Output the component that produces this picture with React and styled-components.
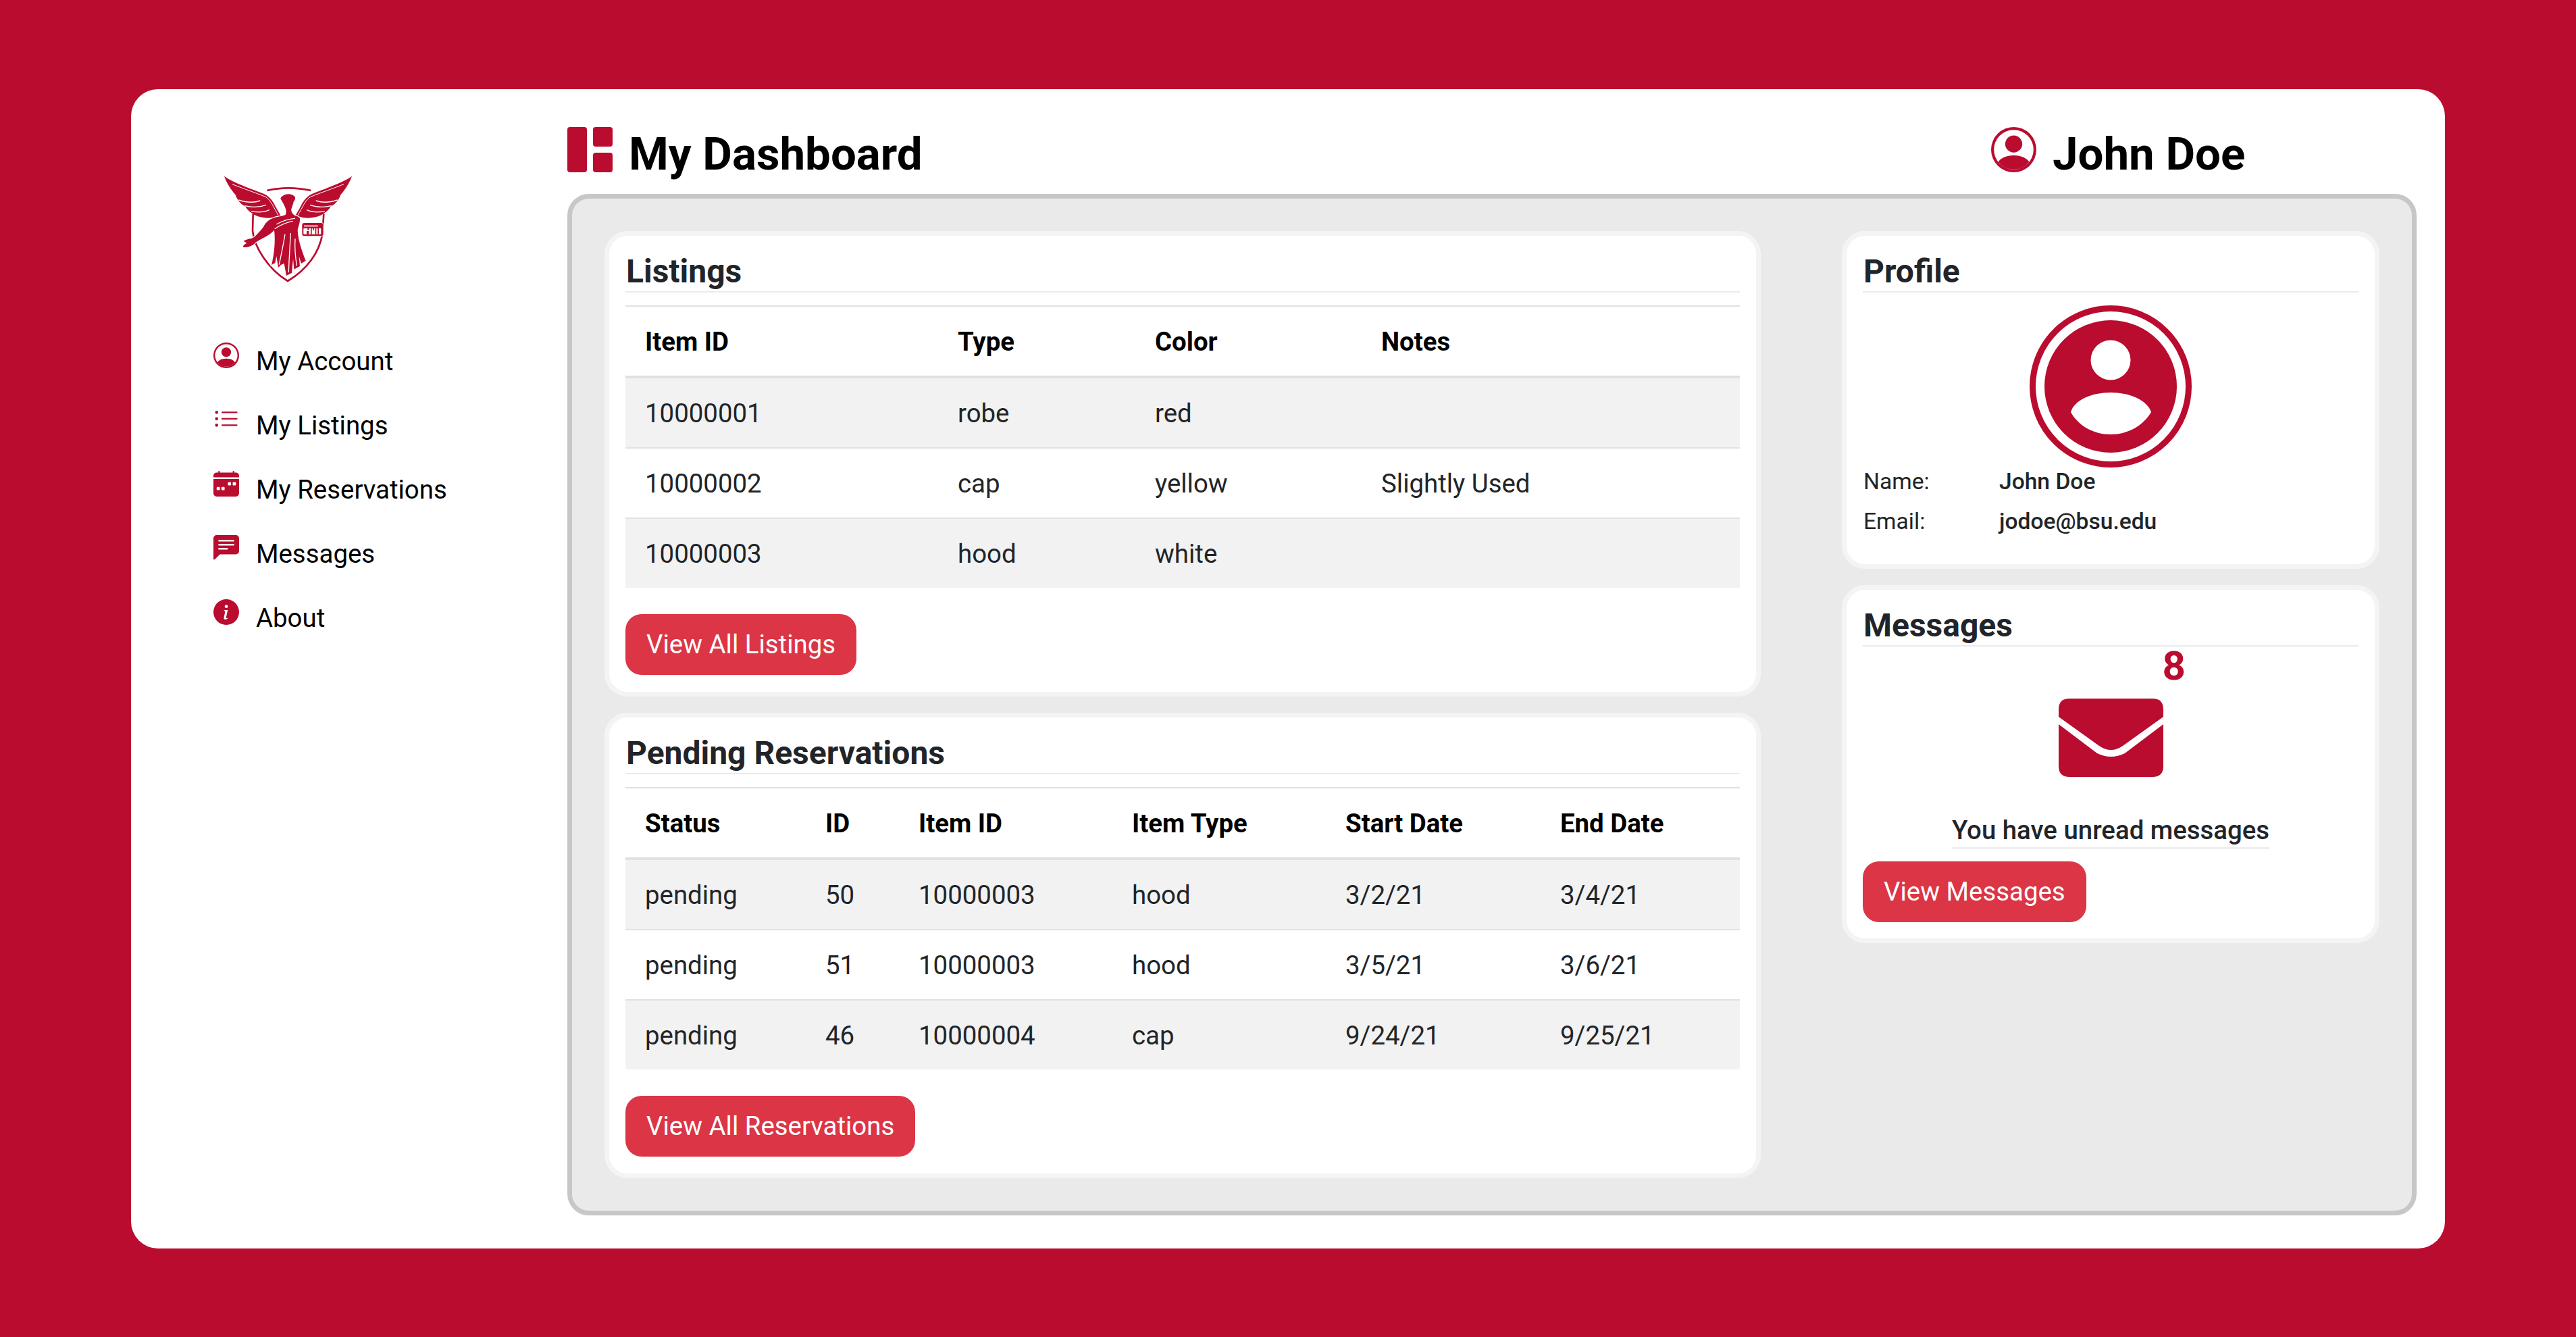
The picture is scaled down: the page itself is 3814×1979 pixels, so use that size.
import React from "react";
import styled, { createGlobalStyle } from "styled-components";

const RED = "#BA0C2F";

const Global = createGlobalStyle`
  html, body { margin: 0; padding: 0; background: ${RED}; }
  * { box-sizing: border-box; }
  body { font-family: Roboto, "Liberation Sans", sans-serif; }
`;

const Page = styled.div`
  width: 3814px;
  height: 1979px;
  padding: 132px 194px 131px 194px;
  background: ${RED};
`;
const Shell = styled.div`
  height: 1716px;
  background: #fff;
  border-radius: 40px;
  display: flex;
  padding: 0 42px 50px 0;
`;
const Sidebar = styled.aside`
  width: 646px;
  flex: none;
  padding: 118px 0 0 122px;
`;
const Logo = styled.svg`
  display: block;
  width: 210px;
  height: 176px;
  margin-left: 6px;
  margin-bottom: 81px;
`;
const Nav = styled.nav`
  display: flex;
  flex-direction: column;
`;
const NavItem = styled.a`
  display: flex;
  align-items: flex-start;
  height: 95px;
  gap: 25px;
  color: #000;
  font-size: 38.4px;
  line-height: 46px;
  svg { width: 38px; height: 38px; flex: none; }
  span { margin-top: 5px; }
`;
const Main = styled.main`
  flex: 1;
  display: flex;
  flex-direction: column;
  min-width: 0;
`;
const Header = styled.header`
  height: 155px;
  flex: none;
  padding-top: 56px;
  display: flex;
`;
const HeadGroup = styled.div`
  display: flex;
  align-items: flex-start;
  gap: 24px;
  width: ${(p) => p.$w || "auto"};
  svg { width: 67px; height: 67px; flex: none; }
`;
const HeadTitle = styled.h1`
  margin: 0;
  font-size: 67.2px;
  line-height: 80px;
  font-weight: 700;
  color: #000;
`;
const Panel = styled.div`
  flex: 1;
  background: #eaeaea;
  border: 7px solid #c8c7c8;
  border-radius: 32px;
  padding: 48px;
  display: flex;
  justify-content: space-between;
  align-items: flex-start;
`;
const Column = styled.div`
  width: ${(p) => p.$w}px;
  display: flex;
  flex-direction: column;
  gap: 24px;
`;
const Card = styled.section`
  background: #fff;
  border: 7px solid #f4f4f4;
  border-radius: 34px;
  padding: 25px 24px;
  height: ${(p) => (p.$h ? `${p.$h}px` : "auto")};
  display: flex;
  flex-direction: column;
`;
const CardTitle = styled.h2`
  margin: 0;
  flex: none;
  font-size: 48px;
  line-height: 56px;
  font-weight: 700;
  color: #212529;
  border-bottom: 2px solid #e9ebed;
  height: 59px;
  padding-left: 1px;
`;
const Table = styled.table`
  border-collapse: separate;
  border-spacing: 0;
  table-layout: fixed;
  width: 100%;
  margin-top: 19px;
  font-size: 38.4px;
  color: #212529;
  th {
    text-align: left;
    font-weight: 700;
    color: #000;
    padding: 0 28px 0 29px;
    height: 108px;
    border-top: 2px solid #dee2e6;
    border-bottom: 4px solid #dee2e6;
  }
  td {
    padding: 0 28px 0 29px;
    height: 104px;
    border-bottom: 2px solid #dee2e6;
  }
  tbody tr:last-child td { border-bottom: 0; height: 102px; }
  tbody tr:nth-child(odd) { background: #f2f2f2; }
`;
const Button = styled.a`
  flex: none;
  align-self: flex-start;
  margin-top: ${(p) => p.$top}px;
  height: 90px;
  display: flex;
  align-items: center;
  padding: 0 31px 2px;
  background: #dc3545;
  border-radius: 24px;
  color: #fff;
  font-size: 38.4px;
`;
const Avatar = styled.svg`
  display: block;
  flex: none;
  width: 240px;
  height: 240px;
  margin: 19px auto 0;
`;
const InfoRow = styled.div`
  display: grid;
  grid-template-columns: 201px 1fr;
  padding-left: 1px;
  font-size: 33.6px;
  line-height: 59px;
  color: #212529;
  b { font-weight: 500; }
`;
const Info = styled.div`
  margin-top: -9px;
`;
const Badge = styled.div`
  flex: none;
  align-self: flex-end;
  margin-right: 256px;
  height: 66px;
  font-size: 60px;
  line-height: 58px;
  font-weight: 700;
  color: ${RED};
`;
const Envelope = styled.svg`
  display: block;
  flex: none;
  width: 155px;
  height: 116px;
  margin: 11px auto 0;
`;
const Unread = styled.div`
  flex: none;
  align-self: center;
  margin-top: 56px;
  font-size: 38.4px;
  line-height: 46px;
  font-weight: 500;
  color: #212529;
  border-bottom: 3px solid #eeeeee;
  padding-bottom: 2px;
`;
const Col = styled.col`
  width: ${(p) => p.$w}px;
`;

const PersonCircle = () => (
  <svg viewBox="0 0 16 16" fill={RED}>
    <path d="M13.468 12.37C12.758 11.226 11.195 10 8 10s-4.757 1.225-5.468 2.37A6.987 6.987 0 0 0 8 15a6.987 6.987 0 0 0 5.468-2.63z" />
    <path fillRule="evenodd" d="M8 9a3 3 0 1 0 0-6 3 3 0 0 0 0 6z" />
    <path fillRule="evenodd" d="M8 1a7 7 0 1 0 0 14A7 7 0 0 0 8 1zM0 8a8 8 0 1 1 16 0A8 8 0 0 1 0 8z" />
  </svg>
);

const Wing = () => (
  <g>
    <path
      fill={RED}
      d="M30 32 C70 62 150 88 205 110 C235 122 250 150 262 175 L287 218 L262 212 C240 220 200 222 165 205 C150 195 132 184 125 168 C105 158 88 140 80 115 C60 92 40 62 30 32Z"
    />
    <path d="M66 68 C110 86 170 106 213 124 C236 136 250 172 270 206" fill="none" stroke="#fff" strokeWidth="3" />
    <path d="M94 138 C130 150 165 150 190 141" fill="none" stroke="#fff" strokeWidth="4" />
    <path d="M120 164 C155 172 190 170 216 160" fill="none" stroke="#fff" strokeWidth="4" />
    <path d="M150 188 C180 194 210 192 230 182" fill="none" stroke="#fff" strokeWidth="4" />
  </g>
);

const LogoMark = () => (
  <Logo viewBox="0 0 630 528">
    <path d="M220 96 C280 82 350 82 415 96" fill="none" stroke={RED} strokeWidth="8" />
    <path
      d="M158 200 L156 275 C162 345 225 445 312 498 C400 445 452 370 466 290 L472 200"
      fill="none"
      stroke={RED}
      strokeWidth="8"
    />
    <Wing />
    <g transform="translate(627 0) scale(-1 1)">
      <Wing />
    </g>
    <path
      fill={RED}
      stroke="#fff"
      strokeWidth="7"
      paintOrder="stroke"
      d="M280 132 C286 112 326 102 344 124 C348 134 342 140 338 146 C336 160 326 176 328 186 C330 196 336 202 342 206 C352 208 360 212 366 218 C368 240 358 256 356 272 C358 320 376 365 392 408 L372 420 L362 388 L366 432 L340 446 L336 400 L330 462 L306 474 L296 420 L282 426 L270 438 L262 388 L256 418 L240 426 C252 380 258 320 252 272 C240 285 226 294 212 302 C196 310 182 318 170 326 C160 338 140 350 116 348 C110 344 118 336 130 330 L116 320 C130 310 150 312 164 302 C178 288 192 274 204 258 C212 240 226 226 248 218 C268 210 286 212 302 204 C312 184 296 160 280 132Z"
    />
    <path d="M262 246 C285 232 315 222 345 220" fill="none" stroke="#fff" strokeWidth="3.5" />
    <path d="M254 266 C280 248 305 238 335 232" fill="none" stroke="#fff" strokeWidth="3.5" />
    <path d="M300 290 C292 340 282 385 274 425" fill="none" stroke="#fff" strokeWidth="4" />
    <path d="M325 285 C322 340 318 400 316 460" fill="none" stroke="#fff" strokeWidth="4" />
    <path d="M345 310 C342 350 346 390 352 430" fill="none" stroke="#fff" strokeWidth="4" />
    <rect x="376" y="240" width="94" height="58" rx="10" fill={RED} stroke="#fff" strokeWidth="6" paintOrder="stroke" />
    <rect x="384" y="251" width="62" height="5" fill="#fff" />
    <rect x="382" y="264" width="78" height="26" rx="2" fill="#fff" />
    <path
      fill={RED}
      d="M400 264 h6 v8 h-6z M414 264 h5 v26 h-5z M424 264 h5 v8 h-5z M434 264 h5 v26 h-5z M445 264 h5 v26 h-5z M396 276 h10 v14 h-10z"
    />
  </Logo>
);

const ListIcon = () => (
  <svg viewBox="0 0 16 16" fill={RED}>
    <path fillRule="evenodd" d="M5 11.5a.5.5 0 0 1 .5-.5h9a.5.5 0 0 1 0 1h-9a.5.5 0 0 1-.5-.5zm0-4a.5.5 0 0 1 .5-.5h9a.5.5 0 0 1 0 1h-9a.5.5 0 0 1-.5-.5zm0-4a.5.5 0 0 1 .5-.5h9a.5.5 0 0 1 0 1h-9a.5.5 0 0 1-.5-.5zm-3 1a1 1 0 1 0 0-2 1 1 0 0 0 0 2zm0 4a1 1 0 1 0 0-2 1 1 0 0 0 0 2zm0 4a1 1 0 1 0 0-2 1 1 0 0 0 0 2z" />
  </svg>
);
const CalIcon = () => (
  <svg viewBox="0 0 16 16" fill={RED}>
    <path d="M4 .5a.5.5 0 0 0-1 0V1H2a2 2 0 0 0-2 2v1h16V3a2 2 0 0 0-2-2h-1V.5a.5.5 0 0 0-1 0V1H4V.5zM16 14V5H0v9a2 2 0 0 0 2 2h12a2 2 0 0 0 2-2zM9.5 7h1a.5.5 0 0 1 .5.5v1a.5.5 0 0 1-.5.5h-1a.5.5 0 0 1-.5-.5v-1a.5.5 0 0 1 .5-.5zm3 0h1a.5.5 0 0 1 .5.5v1a.5.5 0 0 1-.5.5h-1a.5.5 0 0 1-.5-.5v-1a.5.5 0 0 1 .5-.5zM2 10.5a.5.5 0 0 1 .5-.5h1a.5.5 0 0 1 .5.5v1a.5.5 0 0 1-.5.5h-1a.5.5 0 0 1-.5-.5v-1zm3.5-.5h1a.5.5 0 0 1 .5.5v1a.5.5 0 0 1-.5.5h-1a.5.5 0 0 1-.5-.5v-1a.5.5 0 0 1 .5-.5z" />
  </svg>
);
const ChatIcon = () => (
  <svg viewBox="0 0 16 16" fill={RED}>
    <path fillRule="evenodd" d="M0 2a2 2 0 0 1 2-2h12a2 2 0 0 1 2 2v8a2 2 0 0 1-2 2H4.414a1 1 0 0 0-.707.293L.854 15.146A.5.5 0 0 1 0 14.793V2zm3.5 1a.5.5 0 0 0 0 1h9a.5.5 0 0 0 0-1h-9zm0 2.5a.5.5 0 0 0 0 1h9a.5.5 0 0 0 0-1h-9zm0 2.5a.5.5 0 0 0 0 1h5a.5.5 0 0 0 0-1h-5z" />
  </svg>
);
const InfoIcon = () => (
  <svg viewBox="0 0 16 16" fill={RED}>
    <path fillRule="evenodd" d="M8 16A8 8 0 1 0 8 0a8 8 0 0 0 0 16zm.93-9.412l-2.29.287-.082.38.45.083c.294.07.352.176.288.469l-.738 3.468c-.194.897.105 1.319.808 1.319.545 0 1.178-.252 1.465-.598l.088-.416c-.2.176-.492.246-.686.246-.275 0-.375-.193-.304-.533L8.93 6.588zM8 5.5a1 1 0 1 0 0-2 1 1 0 0 0 0 2z" />
  </svg>
);
const DashIcon = () => (
  <svg viewBox="0 0 67 67" fill={RED}>
    <rect x="0" y="0" width="29" height="67" rx="4" />
    <rect x="38" y="0" width="29" height="29" rx="4" />
    <rect x="38" y="38" width="29" height="29" rx="4" />
  </svg>
);

const listingCols = [463, 292, 335, 560];
const resCols = [267, 138, 316, 316, 318, 295];

const DataTable = ({ cols, head, rows }) => (
  <Table>
    <colgroup>
      {cols.map((w, i) => (
        <Col key={i} $w={w} />
      ))}
    </colgroup>
    <thead>
      <tr>
        {head.map((h) => (
          <th key={h}>{h}</th>
        ))}
      </tr>
    </thead>
    <tbody>
      {rows.map((r, i) => (
        <tr key={i}>
          {r.map((c, j) => (
            <td key={j}>{c}</td>
          ))}
        </tr>
      ))}
    </tbody>
  </Table>
);

const nav = [
  ["My Account", <PersonCircle />],
  ["My Listings", <ListIcon />],
  ["My Reservations", <CalIcon />],
  ["Messages", <ChatIcon />],
  ["About", <InfoIcon />],
];

export default function App() {
  return (
    <Page>
      <Global />
      <Shell>
        <Sidebar>
          <LogoMark />
          <Nav>
            {nav.map(([t, i]) => (
              <NavItem key={t}>
                {i}
                <span>{t}</span>
              </NavItem>
            ))}
          </Nav>
        </Sidebar>
        <Main>
          <Header>
            <HeadGroup $w="2108px">
              <DashIcon />
              <HeadTitle>My Dashboard</HeadTitle>
            </HeadGroup>
            <HeadGroup>
              <PersonCircle />
              <HeadTitle>John Doe</HeadTitle>
            </HeadGroup>
          </Header>
          <Panel>
            <Column $w={1712}>
              <Card>
                <CardTitle>Listings</CardTitle>
                <DataTable
                  cols={listingCols}
                  head={["Item ID", "Type", "Color", "Notes"]}
                  rows={[
                    ["10000001", "robe", "red", ""],
                    ["10000002", "cap", "yellow", "Slightly Used"],
                    ["10000003", "hood", "white", ""],
                  ]}
                />
                <Button $top={39}>View All Listings</Button>
              </Card>
              <Card>
                <CardTitle>Pending Reservations</CardTitle>
                <DataTable
                  cols={resCols}
                  head={["Status", "ID", "Item ID", "Item Type", "Start Date", "End Date"]}
                  rows={[
                    ["pending", "50", "10000003", "hood", "3/2/21", "3/4/21"],
                    ["pending", "51", "10000003", "hood", "3/5/21", "3/6/21"],
                    ["pending", "46", "10000004", "cap", "9/24/21", "9/25/21"],
                  ]}
                />
                <Button $top={39}>View All Reservations</Button>
              </Card>
            </Column>
            <Column $w={796}>
              <Card $h={500}>
                <CardTitle>Profile</CardTitle>
                <Avatar viewBox="0 0 240 240">
                  <circle cx="120" cy="120" r="115.5" fill="none" stroke={RED} strokeWidth="9" />
                  <circle cx="120" cy="120" r="98" fill={RED} />
                  <circle cx="120" cy="81" r="29.5" fill="#fff" />
                  <path d="M61 158 C66 140 92 129 120 129 C148 129 174 140 180 158 C168 178 146 191 120 191 C94 191 72 178 61 158Z" fill="#fff" />
                </Avatar>
                <Info>
                  <InfoRow>
                    <span>Name:</span>
                    <b>John Doe</b>
                  </InfoRow>
                  <InfoRow>
                    <span>Email:</span>
                    <b>jodoe@bsu.edu</b>
                  </InfoRow>
                </Info>
              </Card>
              <Card $h={530}>
                <CardTitle>Messages</CardTitle>
                <Badge>8</Badge>
                <Envelope viewBox="0 0 155 116">
                  <path
                    d="M0 27 V16 Q0 0 16 0 H139 Q155 0 155 16 V27 L95 70 Q77.5 82 60 70Z"
                    fill={RED}
                  />
                  <path
                    d="M0 38 L57 81 Q77.5 91 98 81 L155 38 V100 Q155 116 139 116 H16 Q0 116 0 100Z"
                    fill={RED}
                  />
                </Envelope>
                <Unread>You have unread messages</Unread>
                <Button $top={18}>View Messages</Button>
              </Card>
            </Column>
          </Panel>
        </Main>
      </Shell>
    </Page>
  );
}
